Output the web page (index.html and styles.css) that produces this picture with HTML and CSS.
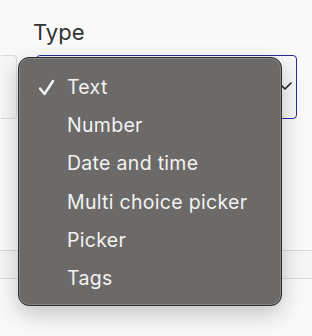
FILE: index.html
```html
<!DOCTYPE html>
<html>
<head>
<meta charset="utf-8">
<link rel="stylesheet" href="styles.css">
</head>
<body>
<div class="page">
  <div class="label">Type</div>
  <div class="row">
    <div class="side-box"></div>
    <div class="select">
      <svg class="chev" width="14" height="10" viewBox="0 0 14 10"><path d="M1 2 L7 8 L13 2" fill="none" stroke="#222" stroke-width="1.6" stroke-linecap="round" stroke-linejoin="round"/></svg>
    </div>
  </div>
  <div class="band"></div>
  <div class="menu">
    <div class="item checked"><svg class="check" width="17" height="17" viewBox="0 0 17 17"><path d="M2 9.5 L6.5 15 L15 2" fill="none" stroke="#f4f4f4" stroke-width="2.4" stroke-linecap="round" stroke-linejoin="round"/></svg>Text</div>
    <div class="item">Number</div>
    <div class="item">Date and time</div>
    <div class="item">Multi choice picker</div>
    <div class="item">Picker</div>
    <div class="item">Tags</div>
  </div>
</div>
</body>
</html>
```
FILE: styles.css
```css
html, body {
  margin: 0;
  padding: 0;
}
body {
  background: #f9f9f9;
  font-family: Inter, "Liberation Sans", sans-serif;
  width: 312px;
  height: 336px;
  overflow: hidden;
}
.page {
  position: relative;
  height: 336px;
  padding-top: 19px;
  box-sizing: border-box;
}
.label {
  padding-left: 33px;
  font-size: 22px;
  line-height: 26px;
  color: #333;
  height: 36px;
}
.row {
  display: flex;
  gap: 19px;
  height: 64px;
}
.side-box {
  width: 15px;
  margin-left: 1px;
  background: #f6f6f6;
  border: 1px solid #dcdcdc;
  border-left: none;
  border-radius: 0 4px 4px 0;
}
.select {
  width: 259px;
  border: 1px solid #2b2b98;
  border-radius: 4px;
  background: #f7f7f7;
  position: relative;
}
.chev {
  position: absolute;
  left: 241px;
  top: 25px;
}
.band {
  margin-top: 131px;
  height: 27px;
  border-top: 1px solid #dadada;
  border-bottom: 1px solid #dadada;
  background: #f5f5f5;
}
.menu {
  position: absolute;
  left: 18px;
  top: 57px;
  width: 264px;
  height: 249px;
  box-sizing: border-box;
  background: #6b6a68;
  border: 1px solid #2e2e2e;
  box-shadow: inset 0 0 0 1px #858482, 0 8px 22px rgba(0,0,0,0.22);
  border-radius: 11px;
  padding-top: 14px;
}
.item {
  position: relative;
  height: 38.2px;
  line-height: 30px;
  padding-left: 48px;
  font-size: 19.5px;
  letter-spacing: 0.3px;
  color: #f2f2f2;
}
.check {
  position: absolute;
  left: 19px;
  top: 7px;
}
```
